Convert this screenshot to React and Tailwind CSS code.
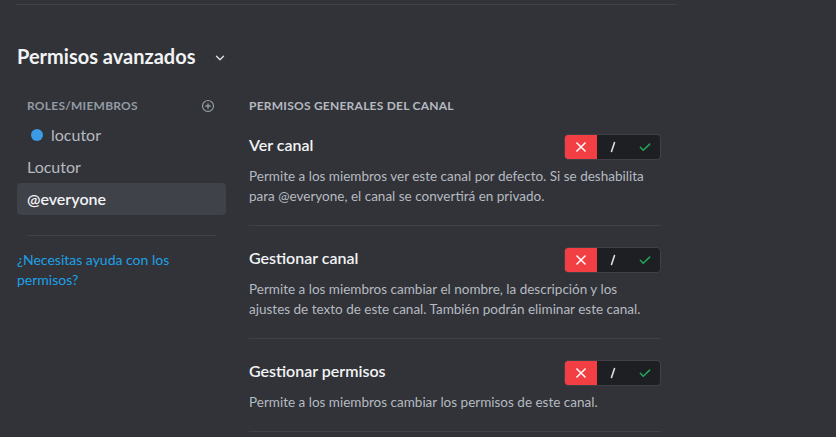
import React from "react";

function Toggle() {
  return (
    <div className="flex h-[26px] w-[97px] shrink-0 rounded-[4px] border border-[#3f4147] bg-[#1e1f22] overflow-hidden">
      <div className="flex w-[32px] items-center justify-center bg-[#f23f43]">
        <svg width="14" height="14" viewBox="0 0 24 24" fill="none" stroke="#fff" strokeWidth="2.6" strokeLinecap="round">
          <path d="M5 5l14 14M19 5L5 19" />
        </svg>
      </div>
      <div className="flex w-[32px] items-center justify-center">
        <svg width="12" height="14" viewBox="0 0 12 14" fill="none" stroke="#dbdee1" strokeWidth="1.6" strokeLinecap="round">
          <path d="M7.5 2.5L4.5 11.5" />
        </svg>
      </div>
      <div className="flex flex-1 items-center justify-center">
        <svg width="14" height="14" viewBox="0 0 24 24" fill="none" stroke="#23a55a" strokeWidth="2.6" strokeLinecap="round" strokeLinejoin="round">
          <path d="M4 12.5l5 5L20 7" />
        </svg>
      </div>
    </div>
  );
}

function Perm({ title, desc }) {
  return (
    <div className="border-b border-[#3f4147] pb-[19px] mb-[21px]">
      <div className="flex items-center justify-between">
        <div className="text-[16px] font-semibold leading-5 text-[#f2f3f5] -mt-[5px]">{title}</div>
        <Toggle />
      </div>
      <div className="mt-[6px] pr-[4px] text-[13.5px] leading-5 text-[#b5bac1]">{desc}</div>
    </div>
  );
}

export default function App() {
  return (
    <div className="w-[836px] h-[437px] overflow-hidden bg-[#313338]" style={{ fontFamily: 'Lato, sans-serif' }}>
      <div className="ml-[16px] mt-[4px] w-[661px] border-t border-[#3f4147]" />
      <div className="ml-[17px] mt-[39px] flex items-center">
        <h2 className="text-[20px] font-bold leading-6 text-[#f2f3f5]">Permisos avanzados</h2>
        <svg className="ml-[18px] mt-[3px]" width="14" height="14" viewBox="0 0 24 24" fill="none" stroke="#dbdee1" strokeWidth="2.4" strokeLinecap="round" strokeLinejoin="round">
          <path d="M6 9l6 6 6-6" />
        </svg>
      </div>
      <div className="ml-[17px] mt-[30px] flex gap-[23px]">
        <div className="w-[209px] shrink-0">
          <div className="flex h-4 items-center justify-between pl-[10px] pr-[11px]">
            <span className="text-[12px] font-bold tracking-[0.02em] text-[#949ba4]">ROLES/MIEMBROS</span>
            <svg width="14" height="14" viewBox="0 0 16 16" fill="none" stroke="#949ba4" strokeWidth="1.4">
              <circle cx="8" cy="8" r="6.3" />
              <path d="M8 5v6M5 8h6" strokeWidth="1.6" />
            </svg>
          </div>
          <div className="mt-[5px] flex flex-col">
            <div className="flex h-8 items-center pl-[14px] text-[16px] text-[#b5bac1]">
              <span className="mr-[8px] h-[12px] w-[12px] rounded-full bg-[#3b9be4]" />
              locutor
            </div>
            <div className="flex h-8 items-center pl-[10px] text-[16px] text-[#b5bac1]">Locutor</div>
            <div className="flex h-8 items-center rounded-[4px] bg-[#404249] pl-[10px] text-[16px] font-semibold text-[#f2f3f5]">@everyone</div>
          </div>
          <div className="mx-[10px] mt-[20px] border-t border-[#3f4147]" />
          <div className="mt-[14px] text-[14px] leading-5 text-[#1ea1e8]">¿Necesitas ayuda con los permisos?</div>
        </div>
        <div className="w-[412px]">
          <div className="h-4 flex items-center text-[12px] font-bold tracking-[0.02em] text-[#b5bac1]">PERMISOS GENERALES DEL CANAL</div>
          <div className="mt-[20px]">
            <Perm title="Ver canal" desc="Permite a los miembros ver este canal por defecto. Si se deshabilita para @everyone, el canal se convertirá en privado." />
            <Perm title="Gestionar canal" desc="Permite a los miembros cambiar el nombre, la descripción y los ajustes de texto de este canal. También podrán eliminar este canal." />
            <Perm title="Gestionar permisos" desc="Permite a los miembros cambiar los permisos de este canal." />
          </div>
        </div>
      </div>
    </div>
  );
}
